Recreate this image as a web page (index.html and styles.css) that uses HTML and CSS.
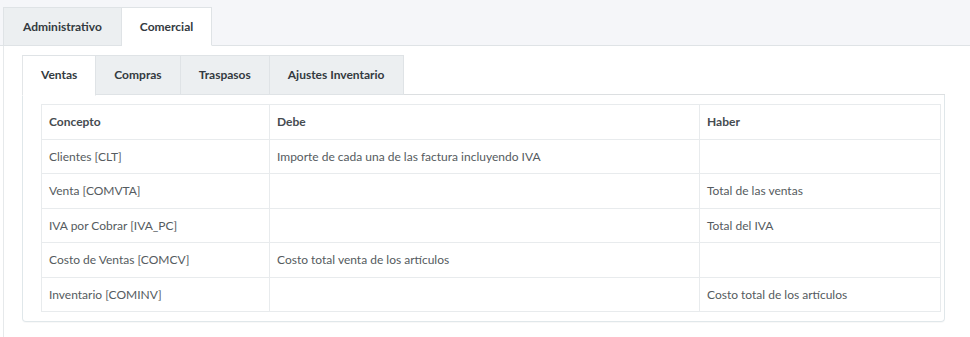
FILE: index.html
```html
<!DOCTYPE html>
<html lang="es">
<head>
<meta charset="utf-8">
<title>Cuentas</title>
<link rel="stylesheet" href="styles.css">
</head>
<body>
<div class="top-tabs">
  <div class="tab">Administrativo</div>
  <div class="tab active">Comercial</div>
</div>
<div class="content">
  <div class="sub-tabs">
    <div class="stab active">Ventas</div>
    <div class="stab">Compras</div>
    <div class="stab">Traspasos</div>
    <div class="stab">Ajustes Inventario</div>
  </div>
  <div class="panel">
    <table class="grid">
      <colgroup>
        <col class="c1"><col class="c2"><col class="c3">
      </colgroup>
      <thead>
        <tr><th>Concepto</th><th>Debe</th><th>Haber</th></tr>
      </thead>
      <tbody>
        <tr><td>Clientes [CLT]</td><td>Importe de cada una de las factura incluyendo IVA</td><td></td></tr>
        <tr><td>Venta [COMVTA]</td><td></td><td>Total de las ventas</td></tr>
        <tr><td>IVA por Cobrar [IVA_PC]</td><td></td><td>Total del IVA</td></tr>
        <tr><td>Costo de Ventas [COMCV]</td><td>Costo total venta de los artículos</td><td></td></tr>
        <tr><td>Inventario [COMINV]</td><td></td><td>Costo total de los artículos</td></tr>
      </tbody>
    </table>
  </div>
</div>
</body>
</html>
```
FILE: styles.css
```css
* { box-sizing: border-box; }
body {
  margin: 0;
  background: #ffffff;
  font-family: Lato, "Open Sans", sans-serif;
  font-size: 12px;
  color: #555b60;
}
.top-tabs {
  display: flex;
  background: #f5f6f9;
  padding: 7px 0 0 3px;
  border-bottom: 1px solid #dfe3e6;
  height: 46px;
}
.tab {
  height: 39px;
  line-height: 37px;
  padding: 0 19px;
  background: #eceff1;
  border: 1px solid #dfe3e6;
  font-weight: 700;
  color: #333a40;
  margin-bottom: -1px;
}
.tab + .tab { border-left: none; }
.tab.active {
  background: #ffffff;
  border-bottom-color: #ffffff;
  padding: 0 18px;
}
.content {
  margin-left: 3px;
  border-left: 1px solid #e6e9eb;
  padding: 9px 25px 16px 18px;
  background: #fff;
}
.sub-tabs {
  display: flex;
  height: 40px;
  border-bottom: 1px solid #dcdfe1;
}
.stab {
  height: 40px;
  line-height: 38px;
  padding: 0 18px;
  background: #eceff1;
  border: 1px solid #dfe3e6;
  border-left: none;
  font-weight: 700;
  color: #333a40;
}
.stab.active {
  background: #fff;
  border-left: 1px solid #e3e6e8;
  border-bottom-color: #fff;
  margin-bottom: -1px;
  height: 41px;
}
.panel {
  border: 1px solid #e0e7ea;
  border-top: none;
  border-radius: 0 0 4px 4px;
  padding: 9px 3px 9px 18px;
  box-shadow: 0 1px 1px rgba(0,0,0,0.03);
}
.grid {
  width: 100%;
  border-collapse: collapse;
  border: 1px solid #e8ebed;
}
.c1 { width: 228px; }
.c2 { width: 430px; }
.grid th, .grid td {
  border: 1px solid #e8ebed;
  padding: 8px 7px;
  line-height: 17.5px;
  text-align: left;
  height: 34.5px;
}
.grid th {
  font-weight: 700;
  color: #454b50;
}
```
